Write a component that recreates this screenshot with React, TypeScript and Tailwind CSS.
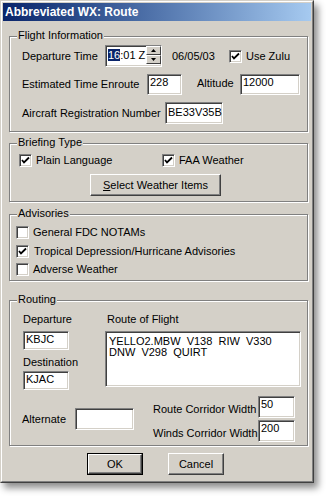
import type { ReactNode } from "react";

const font = "font-['Liberation_Sans',Arial,sans-serif]";

function Field({ className, children }: { className: string; children?: ReactNode }) {
  return (
    <div
      className={`flex items-start border border-t-[#808080] border-l-[#808080] border-r-white border-b-white bg-white pl-[2px] pt-[1px] text-[11px] leading-[13px] text-black shadow-[inset_1px_1px_0_#404040,inset_-1px_-1px_0_#d4d0c8] ${className}`}
    >
      {children}
    </div>
  );
}

function Check({ checked }: { checked?: boolean }) {
  return (
    <div className="h-[13px] w-[13px] shrink-0 border border-t-[#808080] border-l-[#808080] border-r-white border-b-white bg-white shadow-[inset_1px_1px_0_#404040,inset_-1px_-1px_0_#d4d0c8]">
      {checked && (
        <svg width="11" height="11" viewBox="0 0 11 11" className="block">
          <polyline points="2,5 4,7.5 9,2.5" fill="none" stroke="black" strokeWidth="1.8" />
        </svg>
      )}
    </div>
  );
}

function Btn({ children, className, isDefault }: { children: ReactNode; className: string; isDefault?: boolean }) {
  const face = (
    <div className="flex h-full w-full items-center justify-center border border-t-white border-l-white border-r-[#404040] border-b-[#404040] bg-[#d4d0c8] text-[11px] text-black shadow-[inset_-1px_-1px_0_#808080]">
      {children}
    </div>
  );
  if (isDefault) {
    return <div className={`border border-black ${className}`}>{face}</div>;
  }
  return <div className={className}>{face}</div>;
}

function Group({ title, className, children }: { title: string; className: string; children: ReactNode }) {
  return (
    <div
      className={`relative ml-[6px] w-[299px] border border-[#808080] shadow-[inset_1px_1px_0_#fff,1px_1px_0_#fff] ${className}`}
    >
      <span className="absolute -top-[8px] left-[7px] bg-[#d4d0c8] px-[1px] text-[11px] leading-[13px] text-black">
        {title}
      </span>
      {children}
    </div>
  );
}

export default function App() {
  return (
    <div className={`h-[499px] w-[330px] bg-white leading-[13px] ${font}`}>
      <div className="flex h-[483px] w-[314px] flex-col border border-t-[#d4d0c8] border-l-[#d4d0c8] border-r-[#404040] border-b-[#404040] bg-[#d4d0c8] shadow-[4px_5px_7px_rgba(0,0,0,0.45)]">
        <div className="flex h-full flex-col border border-t-white border-l-white border-r-[#808080] border-b-[#808080] p-[1px]">
          {/* title bar */}
          <div className="flex h-[18px] items-center bg-gradient-to-r from-[#0a246a] to-[#a6caf0] pl-[2px] text-[12px] font-bold text-white">
            Abbreviated WX: Route
          </div>

          {/* Flight Information */}
          <Group title="Flight Information" className="mt-[15px] h-[96px]">
            <div className="mt-[8px] flex items-center pl-[12px] text-[11px] text-black">
              <span className="w-[83px]">Departure Time</span>
              <Field className="h-[22px] w-[57px] justify-between pr-0">
                <span className="mt-[2px]">
                  <span className="bg-[#0a246a] text-white">16</span>:01 Z
                </span>
                <div className="-mt-[1px] flex h-[18px] w-[15px] flex-col">
                  <div className="flex h-[9px] items-center justify-center border border-t-white border-l-white border-r-[#404040] border-b-[#404040] bg-[#d4d0c8]">
                    <svg width="5" height="3" viewBox="0 0 5 3"><polygon points="2.5,0 5,3 0,3" fill="black" /></svg>
                  </div>
                  <div className="flex h-[9px] items-center justify-center border border-t-white border-l-white border-r-[#404040] border-b-[#404040] bg-[#d4d0c8]">
                    <svg width="5" height="3" viewBox="0 0 5 3"><polygon points="0,0 5,0 2.5,3" fill="black" /></svg>
                  </div>
                </div>
              </Field>
              <span className="ml-[10px] w-[57px]">06/05/03</span>
              <Check checked />
              <span className="ml-[4px]">Use Zulu</span>
            </div>
            <div className="mt-[7px] flex items-center pl-[12px] text-[11px] text-black">
              <span className="w-[125px]">Estimated Time Enroute</span>
              <Field className="h-[21px] w-[35px]">228</Field>
              <span className="ml-[15px] w-[43px] -translate-y-[1px]">Altitude</span>
              <Field className="h-[21px] w-[60px]">12000</Field>
            </div>
            <div className="mt-[7px] flex items-center pl-[12px] text-[11px] text-black">
              <span className="w-[143px]">Aircraft Registration Number</span>
              <Field className="h-[22px] w-[58px] pt-[3px]">BE33V35B</Field>
            </div>
          </Group>

          {/* Briefing Type */}
          <Group title="Briefing Type" className="mt-[11px] h-[59px]">
            <div className="mt-[10px] flex items-center pl-[9px] text-[11px] text-black">
              <Check checked />
              <span className="ml-[4px] w-[126px]">Plain Language</span>
              <Check checked />
              <span className="ml-[4px]">FAA Weather</span>
            </div>
            <div className="mt-[7px] pl-[80px]">
              <Btn className="h-[22px] w-[131px]">
                <span>
                  <span className="underline">S</span>elect Weather Items
                </span>
              </Btn>
            </div>
          </Group>

          {/* Advisories */}
          <Group title="Advisories" className="mt-[12px] h-[67px]">
            <div className="mt-[11px] flex flex-col pl-[6px] text-[11px] text-black">
              <div className="flex items-center">
                <Check />
                <span className="ml-[4px]">General FDC NOTAMs</span>
              </div>
              <div className="mt-[6px] flex items-center">
                <Check checked />
                <span className="ml-[5px]">Tropical Depression/Hurricane Advisories</span>
              </div>
              <div className="mt-[5px] flex items-center">
                <Check />
                <span className="ml-[4px]">Adverse Weather</span>
              </div>
            </div>
          </Group>

          {/* Routing */}
          <Group title="Routing" className="mt-[19px] h-[146px]">
            <div className="mt-[12px] flex pl-[13px] text-[11px] leading-[12px] text-black">
              <div className="flex w-[82px] flex-col">
                <span>Departure</span>
                <Field className="mt-[6px] h-[19px] w-[46px]">KBJC</Field>
                <span className="mt-[6px]">Destination</span>
                <Field className="mt-[3px] h-[19px] w-[46px]">KJAC</Field>
              </div>
              <div className="flex flex-col">
                <span className="ml-[2px]">Route of Flight</span>
                <div className="mt-[6px] h-[56px] w-[196px] whitespace-pre border border-t-[#808080] border-l-[#808080] border-r-white border-b-white bg-white pl-[3px] pt-[4px] text-[11px] leading-[11px] shadow-[inset_1px_1px_0_#404040,inset_-1px_-1px_0_#d4d0c8]">
                  {"YELLO2.MBW  V138  RIW  V330\nDNW  V298  QUIRT"}
                </div>
              </div>
            </div>
            <div className="mt-[6px] flex items-center pl-[12px] text-[11px] text-black">
              <span className="w-[53px]">Alternate</span>
              <Field className="h-[22px] w-[59px]" />
              <div className="ml-[19px] flex flex-col gap-[2px]">
                <div className="flex items-center">
                  <span className="w-[105px] translate-y-[2px]">Route Corridor Width</span>
                  <Field className="h-[22px] w-[37px]">50</Field>
                </div>
                <div className="flex items-center">
                  <span className="w-[105px] translate-y-[2px]">Winds Corridor Width</span>
                  <Field className="h-[22px] w-[37px]">200</Field>
                </div>
              </div>
            </div>
          </Group>

          {/* buttons */}
          <div className="mt-[7px] flex pl-[84px]">
            <Btn className="h-[22px] w-[56px]" isDefault>
              OK
            </Btn>
            <Btn className="ml-[25px] h-[22px] w-[56px]">Cancel</Btn>
          </div>
        </div>
      </div>
    </div>
  );
}
